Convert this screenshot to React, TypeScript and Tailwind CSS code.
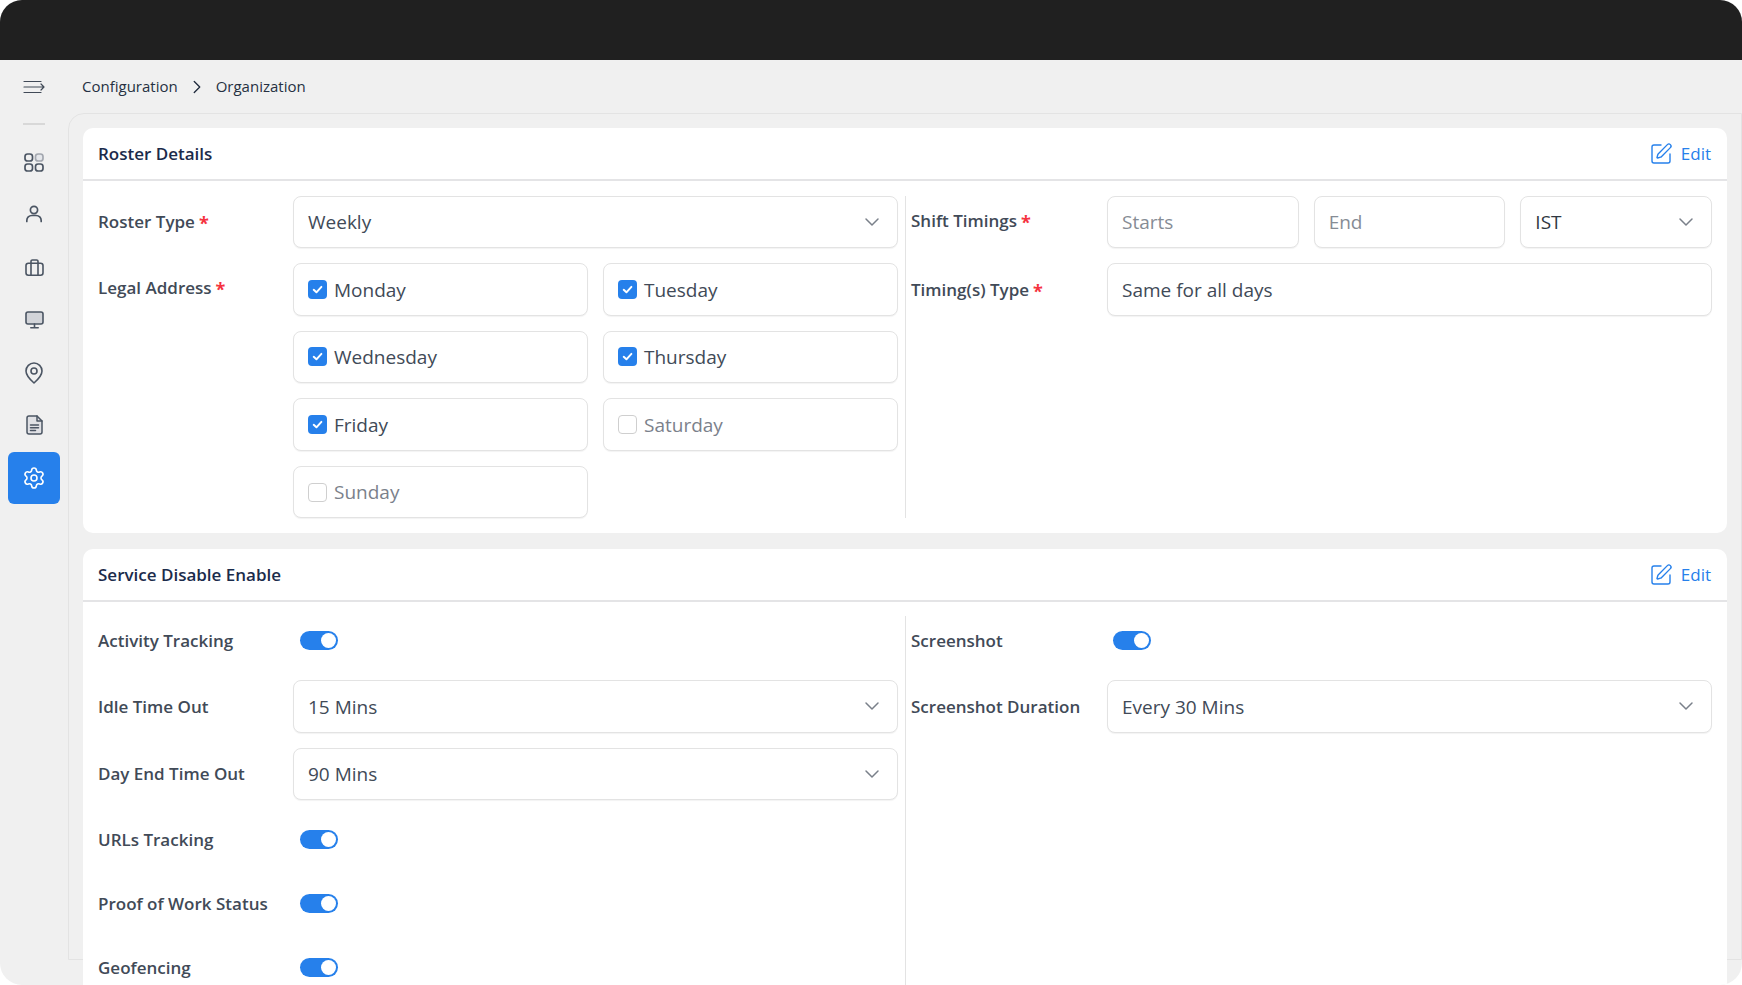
import { ChevronDown, ChevronRight, SquarePen, Settings } from "lucide-react";
import type { ReactNode } from "react";

const font = { fontFamily: '"Open Sans", sans-serif' };

function Req() {
  return <span className="mt-[3px] ml-[4px] text-[18px] leading-none font-bold text-[#f5333f]">*</span>;
}

function Label({ children, req }: { children: ReactNode; req?: boolean }) {
  return (
    <div className="flex items-center text-[17px] font-semibold text-[#414a57] whitespace-nowrap">
      {children}
      {req && <Req />}
    </div>
  );
}

function Box({ children, className = "", color = "text-[#414a57]" }: { children: ReactNode; className?: string; color?: string }) {
  return (
    <div className={`flex h-[52.6px] items-center rounded-[8px] border border-[#e3e3e3] bg-white px-[14px] pt-px text-[19px] shadow-[0_1px_1px_rgba(0,0,0,0.05)] ${color} ${className}`}>
      {children}
    </div>
  );
}

function Select({ value, color }: { value: string; color?: string }) {
  return (
    <Box className="justify-between" color={color}>
      <span>{value}</span>
      <ChevronDown size={24} strokeWidth={1.5} className="-mr-px -mt-px text-[#7a808a]" />
    </Box>
  );
}

function Day({ name, on }: { name: string; on?: boolean }) {
  return (
    <Box color={on ? "text-[#414a57]" : "text-[#7b818b]"}>
      {on ? (
        <span className="mr-[7px] -mt-px flex h-[19px] w-[19px] items-center justify-center rounded-[4px] bg-[#2680eb]">
          <svg width="13" height="13" viewBox="0 0 12 12" fill="none" stroke="white" strokeWidth="1.8" strokeLinecap="round" strokeLinejoin="round">
            <path d="M2.5 6.3 5 8.6 9.6 3.6" />
          </svg>
        </span>
      ) : (
        <span className="mr-[7px] -mt-px h-[19px] w-[19px] rounded-[4px] border border-[#cfcfcf] bg-white" />
      )}
      {name}
    </Box>
  );
}

function Toggle() {
  return (
    <div className="relative h-[19px] w-[38px] rounded-full bg-[#2680eb]">
      <div className="absolute top-[2px] right-[2px] h-[15px] w-[15px] rounded-full bg-white" />
    </div>
  );
}

function CardHead({ title }: { title: string }) {
  return (
    <div className="flex h-[53px] items-center justify-between border-b-2 border-[#e4e4e6] pr-[16px] pl-[15px]">
      <div className="text-[17px] font-semibold text-[#1b2b4b]">{title}</div>
      <div className="flex items-center gap-[8px] text-[17px] font-medium text-[#2680eb]">
        <SquarePen size={24} strokeWidth={1.4} />
        Edit
      </div>
    </div>
  );
}

function Row({ label, req, children, w = "w-[195px]", labelClass = "" }: { label: string; req?: boolean; children: ReactNode; w?: string; labelClass?: string }) {
  return (
    <div className="flex items-center">
      <div className={`${w} shrink-0 ${labelClass}`}>
        <Label req={req}>{label}</Label>
      </div>
      <div className="min-w-0 flex-1">{children}</div>
    </div>
  );
}

function ToggleRow({ label }: { label: string }) {
  return (
    <div className="flex h-[49px] items-center">
      <div className="w-[202px] shrink-0">
        <Label>{label}</Label>
      </div>
      <Toggle />
    </div>
  );
}

function NavItem({ children }: { children: ReactNode }) {
  return <div className="flex h-[52.6px] w-full items-center justify-center text-[#4b5563]">{children}</div>;
}

export default function App() {
  return (
    <div style={font} className="h-[985px] w-full overflow-hidden bg-white">
      <div className="flex h-[985px] flex-col overflow-hidden rounded-[22px] bg-[#f0f0f0]">
        <div className="h-[60px] shrink-0 bg-[#202020]" />
        <div className="flex min-h-0 flex-1">
          <aside className="flex w-[68px] shrink-0 flex-col items-center">
            <div className="flex h-[53px] w-full items-center justify-center text-[#414a57]">
              <svg width="22" height="14" viewBox="0 0 22 14" fill="none" stroke="currentColor" strokeWidth="1.2" strokeLinecap="round" strokeLinejoin="round">
                <path d="M1 1.5h17M1 7h19.5M1 12.5h17M18 4 21 7l-3 3" />
              </svg>
            </div>
            <div className="mt-[9.5px] h-[2px] w-[22px] bg-[#d8d8d8]" />
            <div className="mt-[11.5px] flex w-full flex-col items-center">
              <NavItem>
                <svg width="20" height="19" viewBox="0 0 20 19" fill="none" strokeWidth="1.7">
                  <rect x="1" y="1" width="7.5" height="7" rx="2.6" stroke="#4b5563" />
                  <rect x="11.5" y="1" width="7.5" height="7" rx="2.6" stroke="#a3a7af" fill="#e5e7eb" />
                  <rect x="1" y="11" width="7.5" height="7" rx="2.6" stroke="#4b5563" />
                  <rect x="11.5" y="11" width="7.5" height="7" rx="2.6" stroke="#4b5563" />
                </svg>
              </NavItem>
              <NavItem>
                <svg className="-mt-[2px]" width="18" height="18" viewBox="0 0 18 18" fill="none" stroke="currentColor" strokeWidth="1.7" strokeLinecap="round">
                  <circle cx="9" cy="5" r="3.6" />
                  <path d="M1.8 16.5v-1a5 5 0 0 1 5-5h4.4a5 5 0 0 1 5 5v1" />
                </svg>
              </NavItem>
              <NavItem>
                <svg width="19" height="17" viewBox="0 0 19 17" fill="none" stroke="currentColor" strokeWidth="1.6" strokeLinejoin="round">
                  <rect x="1" y="4.2" width="17" height="12" rx="2.4" />
                  <path d="M6 4V2.4a1.4 1.4 0 0 1 1.4-1.4h4.2A1.4 1.4 0 0 1 13 2.4V4M6 4.2v12M13 4.2v12" />
                </svg>
              </NavItem>
              <NavItem>
                <svg width="19" height="18" viewBox="0 0 19 18" fill="none" stroke="currentColor" strokeWidth="1.6" strokeLinecap="round" strokeLinejoin="round">
                  <rect x="1" y="1" width="17" height="12" rx="2" fill="#d2d4d9" />
                  <path d="M9.5 13v3.6M5.8 16.8h7.4" />
                </svg>
              </NavItem>
              <NavItem>
                <svg width="18" height="22" viewBox="0 0 18 22" fill="none" stroke="currentColor" strokeWidth="1.6" strokeLinejoin="round">
                  <path d="M9 21C5 17.5 1 13.6 1 9a8 8 0 0 1 16 0c0 4.6-4 8.5-8 12Z" />
                  <circle cx="9" cy="9" r="3" />
                </svg>
              </NavItem>
              <NavItem>
                <svg width="17" height="20" viewBox="0 0 17 20" fill="none" stroke="currentColor" strokeWidth="1.5" strokeLinecap="round" strokeLinejoin="round">
                  <path d="M3 1h8l5 5v11a2 2 0 0 1-2 2H3a2 2 0 0 1-2-2V3a2 2 0 0 1 2-2Z" fill="#e0e1e5" />
                  <path d="M11 1v5h5M4.5 10h8M4.5 12.8h8M4.5 15.4h5" />
                </svg>
              </NavItem>
              <div className="flex h-[52.6px] w-[52.5px] items-center justify-center rounded-[6px] bg-[#2680eb] text-white">
                <Settings size={24} strokeWidth={1.6} />
              </div>
            </div>
          </aside>
          <main className="min-w-0 flex-1">
            <div className="flex h-[53px] items-center pl-[14px] text-[15px] text-[#263042]">
              <span>Configuration</span>
              <ChevronRight size={22} strokeWidth={1.5} className="mx-[8px]" />
              <span>Organization</span>
            </div>
            <div className="h-[847px] rounded-tl-[16px] border border-[#e3e3e3] p-[14px]">
              <section className="rounded-[10px] bg-white">
                <CardHead title="Roster Details" />
                <div className="flex px-[15px] pt-[14.5px] pb-[15px]">
                  <div className="flex w-[800px] shrink-0 flex-col gap-[15px]">
                    <Row label="Roster Type" req><Select value="Weekly" /></Row>
                    <div className="flex">
                      <div className="w-[195px] shrink-0 pt-[12px]">
                        <Label req>Legal Address</Label>
                      </div>
                      <div className="grid flex-1 grid-cols-2 gap-[15px]">
                        <Day name="Monday" on />
                        <Day name="Tuesday" on />
                        <Day name="Wednesday" on />
                        <Day name="Thursday" on />
                        <Day name="Friday" on />
                        <Day name="Saturday" />
                        <Day name="Sunday" />
                      </div>
                    </div>
                  </div>
                  <div className="mr-[5px] ml-[7px] w-px shrink-0 bg-[#e3e3e3]" />
                  <div className="flex min-w-0 flex-1 flex-col gap-[15px]">
                    <Row label="Shift Timings" req w="w-[196px]" labelClass="-mt-[3px]">
                      <div className="grid grid-cols-3 gap-[15px]">
                        <Box color="text-[#868c95]">Starts</Box>
                        <Box color="text-[#868c95]">End</Box>
                        <Select value="IST" color="text-[#2f3742]" />
                      </div>
                    </Row>
                    <Row label="Timing(s) Type" req w="w-[196px]"><Box>Same for all days</Box></Row>
                  </div>
                </div>
              </section>
              <section className="mt-[16px] rounded-[10px] bg-white">
                <CardHead title="Service Disable Enable" />
                <div className="flex px-[15px] pt-[13.5px] pb-[15px]">
                  <div className="flex w-[800px] shrink-0 flex-col gap-[15px]">
                    <ToggleRow label="Activity Tracking" />
                    <Row label="Idle Time Out"><Select value="15 Mins" /></Row>
                    <Row label="Day End Time Out"><Select value="90 Mins" /></Row>
                    <ToggleRow label="URLs Tracking" />
                    <ToggleRow label="Proof of Work Status" />
                    <ToggleRow label="Geofencing" />
                  </div>
                  <div className="mr-[5px] ml-[7px] w-px shrink-0 bg-[#e3e3e3]" />
                  <div className="flex min-w-0 flex-1 flex-col gap-[15px]">
                    <ToggleRow label="Screenshot" />
                    <Row label="Screenshot Duration" w="w-[196px]"><Select value="Every 30 Mins" /></Row>
                  </div>
                </div>
              </section>
            </div>
          </main>
        </div>
      </div>
    </div>
  );
}
